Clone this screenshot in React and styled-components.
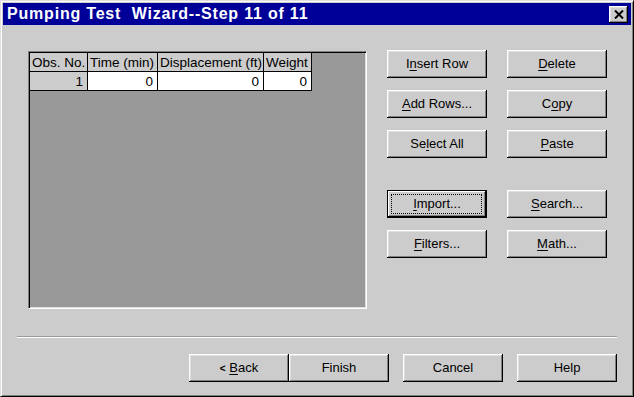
import React from "react";
import styled, { createGlobalStyle } from "styled-components";

const GlobalStyle = createGlobalStyle`
  body {
    margin: 0;
    background: #ffffff;
    font-family: "Liberation Sans", Arial, sans-serif;
  }
`;

const columns = [
  { label: "Obs. No.", width: 58 },
  { label: "Time (min)", width: 70 },
  { label: "Displacement (ft)", width: 106 },
  { label: "Weight", width: 48 },
];

export default function App() {
  return (
    <>
      <GlobalStyle />
      <Window>
        <TitleBar>
          <Title>Pumping Test  Wizard--Step 11 of 11</Title>
          <CloseButton aria-label="Close">
            <svg width="10" height="9" viewBox="0 0 10 9">
              <path d="M1 0.5 L9 8.5 M9 0.5 L1 8.5" stroke="#000" strokeWidth="2" />
            </svg>
          </CloseButton>
        </TitleBar>

        <Body>
          <MainRow>
            <GridFrame>
              <DataTable>
                <colgroup>
                  {columns.map((c) => (
                    <col key={c.label} style={{ width: c.width }} />
                  ))}
                </colgroup>
                <thead>
                  <tr>
                    {columns.map((c) => (
                      <HeadCell key={c.label}>{c.label}</HeadCell>
                    ))}
                  </tr>
                </thead>
                <tbody>
                  <tr>
                    <RowHead>1</RowHead>
                    <Cell>0</Cell>
                    <Cell>0</Cell>
                    <Cell>0</Cell>
                  </tr>
                </tbody>
              </DataTable>
            </GridFrame>

            <Actions>
              <ButtonGrid>
                <Button>
                  I<u>n</u>sert Row
                </Button>
                <Button>
                  <u>D</u>elete
                </Button>
                <Button>
                  <u>A</u>dd Rows...
                </Button>
                <Button>
                  C<u>o</u>py
                </Button>
                <Button>
                  Se<u>l</u>ect All
                </Button>
                <Button>
                  <u>P</u>aste
                </Button>
              </ButtonGrid>
              <ButtonGrid $offset>
                <Button $default>
                  <u>I</u>mport...
                </Button>
                <Button>
                  <u>S</u>earch...
                </Button>
                <Button>
                  <u>F</u>ilters...
                </Button>
                <Button>
                  <u>M</u>ath...
                </Button>
              </ButtonGrid>
            </Actions>
          </MainRow>

          <Separator />

          <Footer>
            <Pair>
              <Button>
                <Chevron>&lt;</Chevron> <u>B</u>ack
              </Button>
              <Button>Finish</Button>
            </Pair>
            <Button>Cancel</Button>
            <Button>Help</Button>
          </Footer>
        </Body>
      </Window>
    </>
  );
}

const Window = styled.div`
  width: 634px;
  height: 397px;
  box-sizing: border-box;
  background: #cccccc;
  border: 1px solid;
  border-color: #dfdfdf #000000 #000000 #dfdfdf;
  box-shadow: inset 1px 1px #ffffff, inset -1px -1px #808080;
  padding: 2px;
  display: flex;
  flex-direction: column;
`;

const TitleBar = styled.div`
  height: 22px;
  flex-shrink: 0;
  background: #000099;
  display: flex;
  align-items: center;
  justify-content: space-between;
  padding: 0 3px 0 4px;
`;

const Title = styled.span`
  color: #ffffff;
  font-weight: bold;
  font-size: 16px;
  white-space: pre;
  letter-spacing: 0.8px;
`;

const CloseButton = styled.div`
  width: 19px;
  height: 17px;
  box-sizing: border-box;
  background: #cccccc;
  display: flex;
  align-items: center;
  justify-content: center;
  box-shadow: inset -1px -1px #000000, inset 1px 1px #ffffff,
    inset -2px -2px #808080, inset 2px 2px #dfdfdf;
`;

const Body = styled.div`
  flex: 1;
  padding: 25px 14px 0;
  display: flex;
  flex-direction: column;
`;

const MainRow = styled.div`
  display: flex;
  align-items: flex-start;
  gap: 20px;
  padding-left: 11px;
`;

const GridFrame = styled.div`
  width: 339px;
  height: 258px;
  margin-top: 1px;
  box-sizing: border-box;
  border: 1px solid;
  border-color: #808080 #ffffff #ffffff #808080;
  box-shadow: inset 1px 1px #000000, inset -1px -1px #dfdfdf;
  background: #999999;
  padding: 1px;
`;

const DataTable = styled.table`
  table-layout: fixed;
  width: 282px;
  border-collapse: separate;
  border-spacing: 0;
  font-size: 13.5px;
  color: #000000;
`;

const baseCell = `
  height: 19px;
  box-sizing: border-box;
  padding: 0 2px;
  border-right: 1px solid #000000;
  border-bottom: 1px solid #000000;
  white-space: nowrap;
  overflow: hidden;
  line-height: 17px;
`;

const HeadCell = styled.th`
  ${baseCell}
  background: #cccccc;
  font-weight: normal;
  text-align: left;
  padding-left: 2px;
  padding-right: 0;
`;

const RowHead = styled.td`
  ${baseCell}
  background: #cccccc;
  text-align: right;
  padding-right: 4px;
`;

const Cell = styled.td`
  ${baseCell}
  background: #ffffff;
  text-align: right;
  padding-right: 4px;
`;

const Actions = styled.div`
  display: flex;
  flex-direction: column;
`;

const ButtonGrid = styled.div`
  display: grid;
  grid-template-columns: 100px 100px;
  grid-auto-rows: 28px;
  column-gap: 20px;
  row-gap: 12px;
  margin-top: ${(p) => (p.$offset ? "32px" : "0")};
`;

const Button = styled.button`
  position: relative;
  width: 100px;
  height: 28px;
  box-sizing: border-box;
  padding: 0 0 1px;
  border: none;
  background: #cccccc;
  color: #000000;
  font-family: "Liberation Sans", Arial, sans-serif;
  font-size: 13px;
  white-space: pre;
  box-shadow: ${(p) =>
    p.$default
      ? "inset 0 0 0 1px #000, inset -2px -2px #000, inset 2px 2px #fff, inset -3px -3px #808080"
      : "inset -1px -1px #000, inset 1px 1px #fff, inset -2px -2px #808080, inset 2px 2px #dfdfdf"};

  u {
    text-decoration-thickness: 1px;
    text-underline-offset: 2px;
  }

  &::after {
    content: "";
    display: ${(p) => (p.$default ? "block" : "none")};
    position: absolute;
    inset: 4px 5px 4px 4px;
    border: 1px dotted #000000;
  }
`;

const Chevron = styled.span`
  font-size: 10px;
  font-weight: bold;
`;

const Separator = styled.div`
  margin-top: 27px;
  height: 0;
  border-top: 1px solid #999999;
  border-bottom: 1px solid #ffffff;
`;

const Footer = styled.div`
  margin-top: 16px;
  display: flex;
  justify-content: flex-end;
  gap: 14px;
`;

const Pair = styled.div`
  display: flex;
`;
